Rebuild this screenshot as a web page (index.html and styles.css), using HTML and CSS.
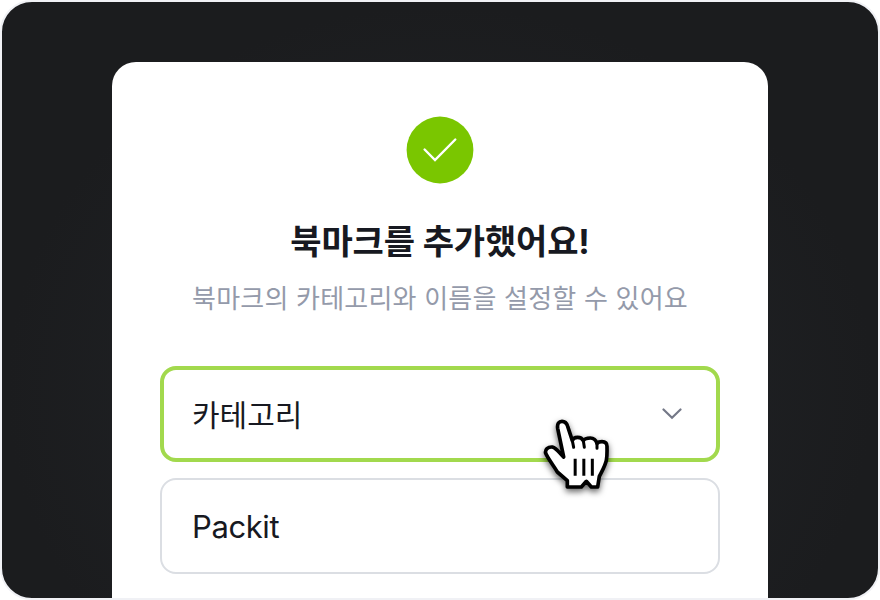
FILE: index.html
```html
<!DOCTYPE html>
<html lang="ko">
<head>
<meta charset="utf-8">
<title>Packit</title>
<link rel="stylesheet" href="styles.css">
</head>
<body>
<main class="screen">
  <section class="dialog">
    <svg class="check" viewBox="0 0 68 68"><circle cx="34" cy="34" r="33.4" fill="#7ac600"/><path d="M18.600 33.500L29 44L49.300 23.500" fill="none" stroke="#fff" stroke-width="2.400" stroke-linecap="round"/></svg>
    <h1 class="title">북마크를 추가했어요!</h1>
    <p class="subtitle">북마크의 카테고리와 이름을 설정할 수 있어요</p>
    <div class="field field-active">
      <span>카테고리</span>
      <svg class="chevron" viewBox="0 0 20 12"><path d="M1.500 1.500L10 9.800L18.500 1.500" fill="none" stroke="#747887" stroke-width="2.200" stroke-linecap="round"/></svg>
      <svg class="pointer" viewBox="18 42 240 252">
        <g stroke="#000" stroke-width="11" stroke-linejoin="round" stroke-linecap="round">
          <path fill="#fff" d="M101 171L83 85C81 71 87 64 96 64C105 64 110 69 113 79L127 122C129 114 135 112 143 112C151 112 157 116 160 122C164 115 172 114 181 114C190 114 197 118 201 130C205 126 210 125 216 125C226 125 231 130 231 139C231 152 232 167 229 181C225 199 216 213 208 229L203 261H184L169 244L154 261H112V242L82 216C70 196 54 176 47 160C44 149 54 140 67 141C81 145 89 161 101 171Z"/>
          <path fill="none" stroke-width="9" d="M127 122L131 142M160 122L163 142M201 130V145"/>
          <path fill="none" stroke-width="9" stroke-linecap="butt" d="M135.500 176V227M161.500 176V227M187 176V227"/>
        </g>
      </svg>
    </div>
    <div class="field"><span class="name">Packit</span></div>
  </section>
</main>
</body>
</html>
```
FILE: styles.css
```css
* { box-sizing: border-box; }
body { margin: 0; background: #fff; font-family: Inter, "Noto Sans CJK KR", sans-serif; }
.screen { width: 880px; height: 600px; overflow: hidden; border: 2px solid #f0f1f5; border-radius: 32px; background: radial-gradient(ellipse at 50% 65%, #1f2124 35%, #1b1c1e 70%); padding: 60px 110px 0; }
.dialog { height: 560px; background: #fff; border-radius: 24px; padding: 54px 48px 0; display: flex; flex-direction: column; align-items: center; }
.check { width: 68px; height: 68px; flex: none; }
.title { margin: 34px 0 0; font-size: 34px; line-height: 48px; font-weight: 700; letter-spacing: -.15px; color: #171921; white-space: nowrap; }
.subtitle { margin: 14px 0 0; font-size: 26px; line-height: 38px; letter-spacing: .2px; color: #949aaa; white-space: nowrap; }
.field { position: relative; width: 560px; height: 96px; flex: none; margin-top: 16px; border: 2px solid #dbdee3; border-radius: 16px; padding: 0 30px; display: flex; align-items: center; justify-content: space-between; font-size: 30px; color: #171921; }
.field-active { margin-top: 48px; border: 4px solid #a2d94d; padding: 0 34px 0 28px; }
.field-active span { margin-top: -3px; }
.name { font-size: 31px; letter-spacing: -.4px; }
.chevron { width: 20px; height: 12px; }
.pointer { position: absolute; left: 372px; top: 44px; width: 80px; height: 84px; z-index: 2; overflow: visible; filter: drop-shadow(0 3px 3px rgba(0,0,0,.6)); }
```
